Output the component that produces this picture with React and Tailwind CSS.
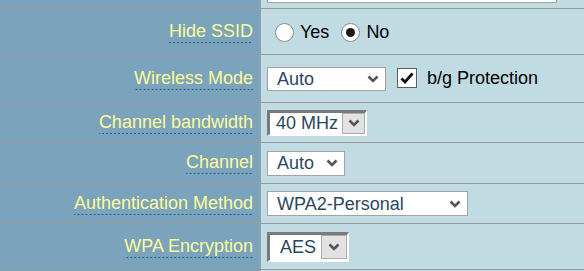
// Wireless settings form (router admin page)

const font = { fontFamily: '"Liberation Sans", Arial, sans-serif' };

const Chevron = ({ className = "" }) => (
  <svg className={className} width="12" height="8" viewBox="0 0 12 8" fill="none">
    <path d="M1.5 1.5 L6 6 L10.5 1.5" stroke="#555" strokeWidth="2.6" strokeLinecap="butt" strokeLinejoin="miter" />
  </svg>
);

// 帶點虛線底線的標籤
function Label({ children }) {
  return (
    <div className="w-[261px] shrink-0 h-full bg-[#7ba3bb] border-r border-[#8e9ea6] flex items-center justify-end pr-[7px]">
      <span className="inline-block leading-[20px] pb-[2px] text-[18px] text-[#fbfb9d] bg-[linear-gradient(to_right,#1f5f8f_50%,transparent_50%)] bg-[length:4px_1px] bg-repeat-x bg-bottom">
        {children}
      </span>
    </div>
  );
}

function Row({ label, h, children }) {
  return (
    <div className={`flex border-b border-[#999] ${h}`}>
      <Label>{label}</Label>
      <div className="flex-1 h-full bg-[#c1dbe3] flex items-center pl-[6px]">{children}</div>
    </div>
  );
}

// 新式下拉選單
function Select({ value, w }) {
  return (
    <div className={`${w} h-[25px] bg-white border border-[#a3a3a3] flex items-center justify-between pl-[9px] pr-[6px]`}>
      <span className="text-[18px] leading-none text-[#2a4760]">{value}</span>
      <Chevron />
    </div>
  );
}

// 舊式立體下拉選單
function OldSelect({ value, w, h, btnW, btnH, pl }) {
  return (
    <div
      className={`${w} ${h} bg-white border-t-[3px] border-l-[3px] border-b-2 border-r-2 border-t-[#7a7a7a] border-l-[#7a7a7a] border-b-white border-r-white flex items-center justify-between ${pl}`}
    >
      <span className="text-[18px] leading-none text-[#2a4760]">{value}</span>
      <div className={`${btnW} ${btnH} bg-[#e2e2e2] border border-[#ababab] flex items-center justify-center`}>
        <Chevron />
      </div>
    </div>
  );
}

function Radio({ checked }) {
  return (
    <div className="w-[19px] h-[19px] rounded-full bg-white border border-[#8a8a8a] flex items-center justify-center">
      {checked && <div className="w-[9px] h-[9px] rounded-full bg-[#1a1a1a]" />}
    </div>
  );
}

export default function App() {
  return (
    <div className="w-[584px] h-[271px] overflow-hidden bg-[#c1dbe3]" style={font}>
      {/* 上一列的尾端 */}
      <div className="flex h-[9px] border-b border-[#999]">
        <div className="w-[261px] shrink-0 h-full bg-[#7ba3bb] border-r border-[#8e9ea6]" />
        <div className="flex-1 h-full pl-[6px]">
          <div className="w-[290px] h-[3px] bg-white border-x border-b border-[#a3a3a3]" />
        </div>
      </div>

      <Row label="Hide SSID" h="h-[46px]">
        <div className="flex items-center ml-[8px] pt-[1px]">
          <Radio />
          <span className="ml-[6px] text-[18px] text-black">Yes</span>
          <div className="ml-[12px]">
            <Radio checked />
          </div>
          <span className="ml-[6px] text-[18px] text-black">No</span>
        </div>
      </Row>

      <Row label="Wireless Mode" h="h-[48px]">
        <div className="flex items-center">
          <div className="w-[119px] h-[24px] bg-white border border-[#a3a3a3] flex items-center justify-between pl-[9px] pr-[6px]">
            <span className="text-[18px] leading-none text-[#2a4760]">Auto</span>
            <Chevron />
          </div>
          <div className="ml-[11px] w-[20px] h-[20px] bg-white border border-[#5e5e5e] flex items-center justify-center -mt-[2px]">
            <svg width="14" height="12" viewBox="0 0 14 12">
              <path d="M1.5 6.5 L5 10 L12.5 1.5" stroke="#111" strokeWidth="2.8" fill="none" />
            </svg>
          </div>
          <span className="ml-[10px] text-[18px] text-black">b/g Protection</span>
        </div>
      </Row>

      <Row label="Channel bandwidth" h="h-[40px]">
        <OldSelect value="40 MHz" w="w-[100px]" h="h-[26px]" btnW="w-[23px]" btnH="h-[21px]" pl="pl-[6px]" />
      </Row>

      <Row label="Channel" h="h-[41px]">
        <Select value="Auto" w="w-[78px]" />
      </Row>

      <Row label="Authentication Method" h="h-[40px]">
        <Select value="WPA2-Personal" w="w-[201px]" />
      </Row>

      <Row label="WPA Encryption" h="h-[46px]">
        <OldSelect value="AES" w="w-[82px]" h="h-[30px]" btnW="w-[26px]" btnH="h-[24px]" pl="pl-[10px]" />
      </Row>

      <div className="flex h-[2px]">
        <div className="w-[261px] shrink-0 h-full bg-[#7ba3bb] border-r border-[#8e9ea6]" />
      </div>
    </div>
  );
}
